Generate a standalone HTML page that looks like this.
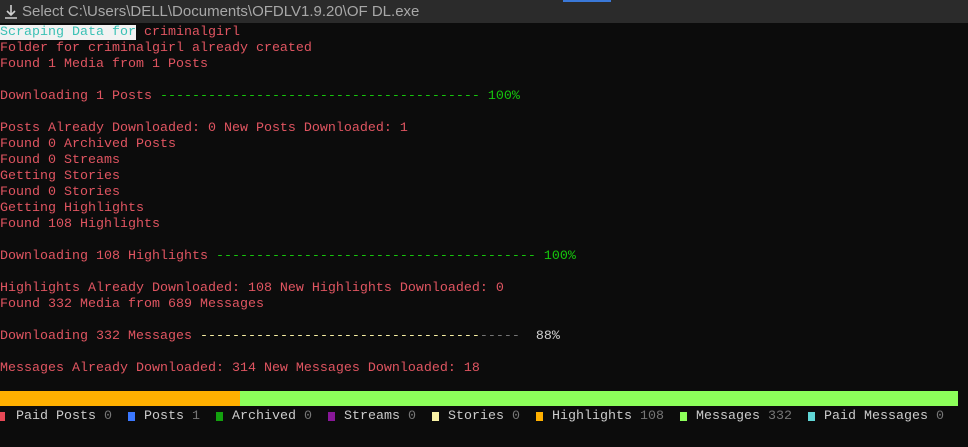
<!DOCTYPE html>
<html><head><meta charset="utf-8"><style>
body{margin:0;width:968px;height:447px;background:#0c0c0c;overflow:hidden;position:relative;font-family:"Liberation Mono",monospace;}
.title{position:absolute;left:0;top:0;width:968px;height:23px;background:#2b2b2b;color:#a8a8a8;font-family:"Liberation Sans",sans-serif;font-size:15px;line-height:23px;}
.title span{position:absolute;left:22px;top:0;}
.blue{position:absolute;left:563px;top:0;width:48px;height:2px;background:#3a78d8;}
.term{position:absolute;left:0;top:25px;font-size:13.33px;line-height:16px;color:#e05561;white-space:pre;}
.c{color:#3bc1b5;background:#f2f2f2;}
.g{color:#16c60c;}
.y{color:#f9f1a5;}
.gr{color:#767676;}
.w{color:#d0d0d0;}
.bar{position:absolute;top:391px;height:15px;}
.sq{position:absolute;top:412px;width:7px;height:9px;}
.t{position:absolute;top:409px;font-size:13.33px;line-height:16px;color:#cccccc;white-space:pre;}
.n{color:#767676;}
</style></head><body>
<div class="title"><svg style="position:absolute;left:3px;top:4px" width="16" height="16" viewBox="0 0 16 16"><path d="M8 1v10M4 7l4 4 4-4M2 14h12" stroke="#cfcfcf" stroke-width="1.6" fill="none"/></svg><span>Select C:\Users\DELL\Documents\OFDLV1.9.20\OF DL.exe</span></div>
<div class="blue"></div>
<div class="term"><span class="c">Scraping Data for</span> criminalgirl
Folder for criminalgirl already created
Found 1 Media from 1 Posts

Downloading 1 Posts <span class="g">---------------------------------------- 100%</span>

Posts Already Downloaded: 0 New Posts Downloaded: 1
Found 0 Archived Posts
Found 0 Streams
Getting Stories
Found 0 Stories
Getting Highlights
Found 108 Highlights

Downloading 108 Highlights <span class="g">---------------------------------------- 100%</span>

Highlights Already Downloaded: 108 New Highlights Downloaded: 0
Found 332 Media from 689 Messages

Downloading 332 Messages <span class="y">-----------------------------------</span><span class="gr">-----</span><span class="w">  88%</span>

Messages Already Downloaded: 314 New Messages Downloaded: 18</div>
<div class="bar" style="left:0;width:240px;background:#ffb000"></div>
<div class="bar" style="left:240px;width:718px;background:#8cff5a"></div>
<div class="sq" style="left:0;width:5px;background:#e74856"></div><div class="t" style="left:16px">Paid Posts <span class="n">0</span></div>
<div class="sq" style="left:128px;background:#3b78ff"></div><div class="t" style="left:144px">Posts <span class="n">1</span></div>
<div class="sq" style="left:216px;background:#13a10e"></div><div class="t" style="left:232px">Archived <span class="n">0</span></div>
<div class="sq" style="left:328px;background:#881798"></div><div class="t" style="left:344px">Streams <span class="n">0</span></div>
<div class="sq" style="left:432px;background:#f9f1a5"></div><div class="t" style="left:448px">Stories <span class="n">0</span></div>
<div class="sq" style="left:536px;background:#ffb000"></div><div class="t" style="left:552px">Highlights <span class="n">108</span></div>
<div class="sq" style="left:680px;background:#8cff5a"></div><div class="t" style="left:696px">Messages <span class="n">332</span></div>
<div class="sq" style="left:808px;background:#61d6d6"></div><div class="t" style="left:824px">Paid Messages <span class="n">0</span></div>
</body></html>
